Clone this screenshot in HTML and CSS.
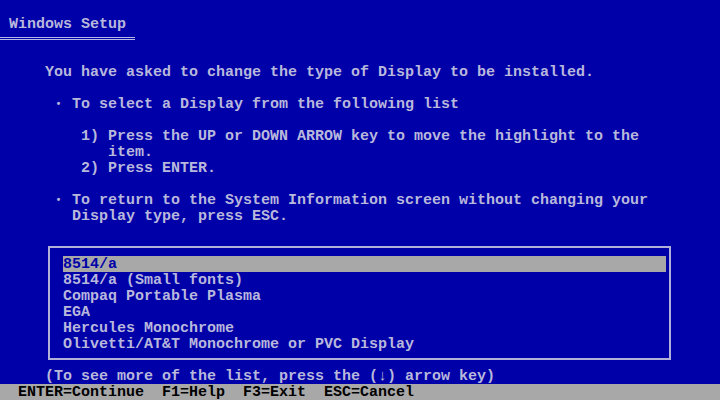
FILE: index.html
```html
<!DOCTYPE html>
<html>
<head>
<meta charset="utf-8">
<link rel="stylesheet" href="styles.css">
</head>
<body>
<div class="screen">
  <div class="row title">Windows Setup</div>
  <div class="rule-row"><div class="rule"></div></div>
  <div class="row c5 gap1">You have asked to change the type of Display to be installed.</div>
  <div class="row c6 gap1"><span class="dot">•</span> To select a Display from the following list</div>
  <div class="row c9 gap1">1) Press the UP or DOWN ARROW key to move the highlight to the</div>
  <div class="row c12">item.</div>
  <div class="row c9">2) Press ENTER.</div>
  <div class="row c6 gap1"><span class="dot">•</span> To return to the System Information screen without changing your</div>
  <div class="row c8">Display type, press ESC.</div>
  <div class="box">
    <div class="item selected">8514/a</div>
    <div class="item">8514/a (Small fonts)</div>
    <div class="item">Compaq Portable Plasma</div>
    <div class="item">EGA</div>
    <div class="item">Hercules Monochrome</div>
    <div class="item">Olivetti/AT&amp;T Monochrome or PVC Display</div>
  </div>
  <div class="row c5">(To see more of the list, press the (↓) arrow key)</div>
  <div class="status">ENTER=Continue  F1=Help  F3=Exit  ESC=Cancel</div>
</div>
</body>
</html>
```
FILE: styles.css
```css
html, body {
  margin: 0;
  padding: 0;
  background: #0000a8;
}
.screen {
  width: 720px;
  height: 400px;
  background: #0000a8;
  color: #b8b8dc;
  font-family: "Liberation Mono", monospace;
  font-size: 15px;
  font-weight: bold;
  line-height: 18px;
  display: flex;
  flex-direction: column;
  overflow: hidden;
}
.row {
  height: 16px;
  white-space: pre;
}
.title {
  margin-top: 16px;
  padding-left: 9px;
}
.rule-row {
  height: 16px;
}
.rule {
  width: 135px;
  height: 1px;
  margin-top: 5px;
  border-top: 1px solid #b8b8e8;
  border-bottom: 1px solid #b8b8e8;
}
.gap1 { margin-top: 16px; }
.c5 { padding-left: 45px; }
.c6 { padding-left: 54px; }
.c8 { padding-left: 72px; }
.c9 { padding-left: 81px; }
.c12 { padding-left: 108px; }
.dot {
  display: inline-block;
  width: 9px;
  font-size: 10px;
  text-align: center;
  vertical-align: top;
}
.box {
  margin-top: 22px;
  margin-left: 48px;
  margin-bottom: 8px;
  box-sizing: border-box;
  width: 623px;
  height: 114px;
  border: 2px solid #b0b0d8;
  padding: 8px 3px 0 13px;
}
.item {
  height: 16px;
  white-space: pre;
}
.selected {
  background: #a8a8a8;
  color: #0000a8;
}
.status {
  height: 16px;
  background: #a8a8a8;
  color: #000;
  padding-left: 18px;
  white-space: pre;
}
```
